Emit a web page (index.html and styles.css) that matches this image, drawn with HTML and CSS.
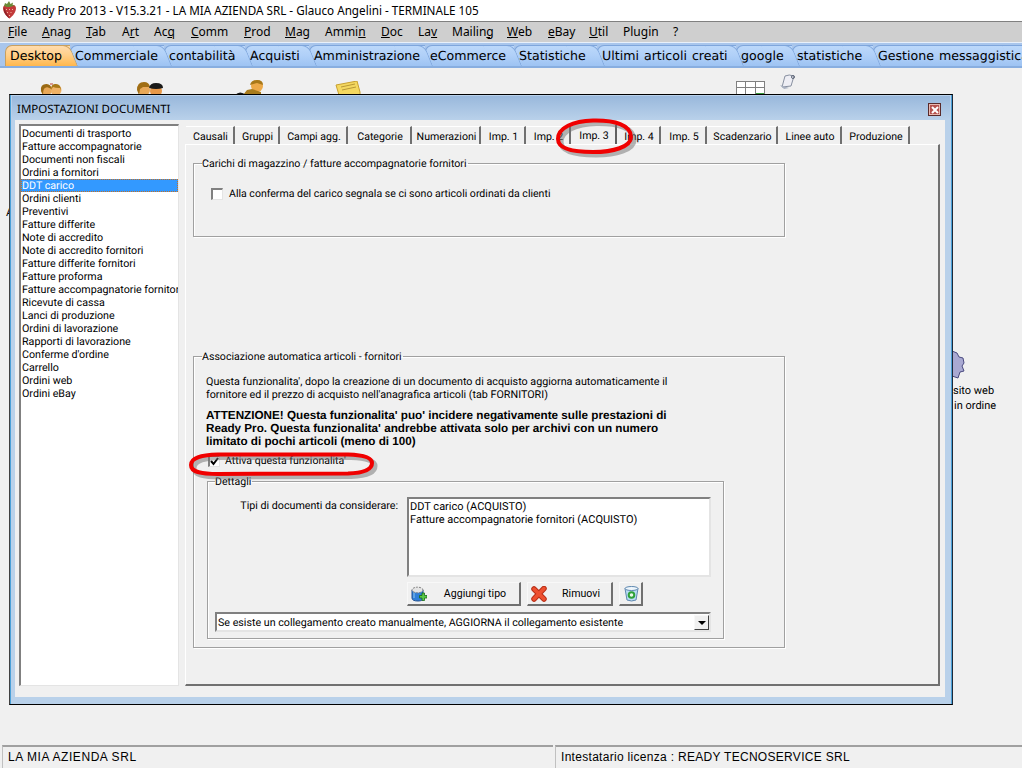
FILE: index.html
```html
<!DOCTYPE html>
<html lang="it">
<head>
<meta charset="utf-8">
<title>Ready Pro 2013</title>
<link rel="stylesheet" href="styles.css">
</head>
<body>
<div class="app">
  <header class="titlebar">
    <svg class="berry" width="15" height="18" viewBox="0 0 15 18"><path d="M1 7C1 4 4 3 7.500 4C11 3 14 4 14 7C14 11 11 15 7.500 17.500C4 15 1 11 1 7Z" fill="#c23a3a"/><path d="M2 6C3 10 6 14 7.500 17.500C4 15 1 11 2 6Z" fill="#8e2228"/><path d="M3 2L5 3L7 0L8.500 3L11 1.500L10.500 4L13 4.500L8 6L5 6L2 5Z" fill="#6a8a38"/><path d="M4 8L5 9M7 8L8 9M10 8L11 9M5 11L6 12M8.500 11L9.500 12M7 14L8 15" stroke="#f0b8a0"/></svg>
    <span class="apptitle">Ready Pro 2013 - V15.3.21 - LA MIA AZIENDA SRL - Glauco Angelini - TERMINALE 105</span>
  </header>
  <nav class="menubar">
    <span><u>F</u>ile</span><span><u>A</u>nag</span><span><u>T</u>ab</span><span>A<u>r</u>t</span><span>Ac<u>q</u></span><span><u>C</u>omm</span><span><u>P</u>rod</span><span><u>M</u>ag</span><span>Ammi<u>n</u></span><span><u>D</u>oc</span><span>La<u>v</u></span><span>Mailin<u>g</u></span><span><u>W</u>eb</span><span><u>e</u>Bay</span><span><u>U</u>til</span><span>Plugin</span><span>?</span>
  </nav>
  <nav class="maintabs">
    <span class="mtab active">Desktop</span><span class="mtab">Commerciale</span><span class="mtab">contabilità</span><span class="mtab">Acquisti</span><span class="mtab">Amministrazione</span><span class="mtab">eCommerce</span><span class="mtab">Statistiche</span><span class="mtab">Ultimi articoli creati</span><span class="mtab">google</span><span class="mtab">statistiche</span><span class="mtab">Gestione messaggistica</span>
  </nav>
  <main class="desktop">
    <svg class="dicon di1" width="22" height="12" viewBox="0 0 22 12"><circle cx="6.500" cy="7" r="5.500" fill="#e8a858"/><path d="M1 8Q0 1 6.500 1Q11 1 12 7Q8 3 5 5Q3 6 3 12Z" fill="#9a6a14"/><circle cx="16" cy="7" r="5.500" fill="#efb266"/><path d="M11 7Q11 0 16 1Q21 1 21 8L20 5Q15 5 13 4Z" fill="#a87818"/><path d="M10 1H13" stroke="#c04030"/></svg>
    <svg class="dicon di2" width="27" height="13" viewBox="0 0 27 13"><circle cx="7" cy="8" r="6" fill="#e8a858"/><path d="M0 8Q0 0 7 0Q12 0 13 5L6 5L3 7L2 13Z" fill="#a06e14"/><circle cx="19" cy="9" r="6" fill="#e89848"/><path d="M12 6Q13 1 19 1Q26 1 26 6Q19 8 12 6Z" fill="#1a1a1a"/></svg>
    <svg class="dicon di3" width="30" height="15" viewBox="0 0 30 15"><circle cx="22" cy="6" r="6" fill="#eda948"/><path d="M15 5Q16 0 22 0Q28 0 28 5L22 3Z" fill="#a87818"/><path d="M8 15L12 10L17 9L26 12L26 15Z" fill="#a87b1c"/><path d="M0 15Q5 10 11 15Z" fill="#1a1a1a"/></svg>
    <svg class="dicon di4" width="26" height="14" viewBox="0 0 26 14"><path d="M1 4L22 0L25 11L25 14L4 14Z" fill="#f4d860" stroke="#c8a030"/><path d="M6 6L20 3M7 9L21 6" stroke="#b89838"/></svg>
    <svg class="dicon di5" width="29" height="13" viewBox="0 0 29 13"><rect x=".5" y=".5" width="28" height="13" fill="#fff" stroke="#808080"/><path d="M9.500 0V13M19.500 0V13M0 6.500H29" stroke="#808080"/><rect x="20" y="12" width="8" height="1" fill="#3a9a3a"/></svg>
    <svg class="dicon di6" width="15" height="15" viewBox="0 0 15 15"><path d="M5 2Q9 0 14 2L11 12L2 13Z" fill="#eeeef4" stroke="#8890a0"/><path d="M0 11L9 14L4 15Z" fill="#a8b0c0"/><circle cx="13" cy="3" r="1.500" fill="none" stroke="#606878"/></svg>
    <svg class="dicon di7" width="14" height="30" viewBox="0 0 14 30"><path d="M0 1L5 3L7 7L11 8L12 13L10 16L12 21L8 22L6 28L0 26Z" fill="#a9a9d2" stroke="#4a4a80"/></svg>
    <span class="dlabel dl1">A</span>
    <span class="dlabel dl2">sito web</span>
    <span class="dlabel dl3">in ordine</span>

    <section class="dialog">
      <div class="dialog-title"><span>IMPOSTAZIONI DOCUMENTI</span><span class="closebtn"><svg width="8" height="8" viewBox="0 0 8 8"><path d="M1 1L7 7M7 1L1 7" stroke="#fff" stroke-width="2"/></svg></span></div>
      <div class="dialog-body">
        <ul class="doclist">
          <li>Documenti di trasporto</li><li>Fatture accompagnatorie</li><li>Documenti non fiscali</li><li>Ordini a fornitori</li><li class="sel">DDT carico</li><li>Ordini clienti</li><li>Preventivi</li><li>Fatture differite</li><li>Note di accredito</li><li>Note di accredito fornitori</li><li>Fatture differite fornitori</li><li>Fatture proforma</li><li>Fatture accompagnatorie fornitori</li><li>Ricevute di cassa</li><li>Lanci di produzione</li><li>Ordini di lavorazione</li><li>Rapporti di lavorazione</li><li>Conferme d'ordine</li><li>Carrello</li><li>Ordini web</li><li>Ordini eBay</li>
        </ul>
        <div class="pane">
          <div class="subtabs">
            <span>Causali</span><span>Gruppi</span><span>Campi agg.</span><span>Categorie</span><span>Numerazioni</span><span>Imp. 1</span><span>Imp. 2</span><span class="cur">Imp. 3</span><span>Imp. 4</span><span>Imp. 5</span><span>Scadenzario</span><span>Linee auto</span><span>Produzione</span>
          </div>
          <div class="panel">
            <fieldset class="group g1">
              <legend>Carichi di magazzino / fatture accompagnatorie fornitori</legend>
              <label class="check"><span class="box"></span>Alla conferma del carico segnala se ci sono articoli ordinati da clienti</label>
            </fieldset>
            <fieldset class="group g2">
              <legend>Associazione automatica articoli - fornitori</legend>
              <p class="desc">Questa funzionalita', dopo la creazione di un documento di acquisto aggiorna automaticamente il fornitore ed il prezzo di acquisto nell'anagrafica articoli (tab FORNITORI)</p>
              <p class="warn">ATTENZIONE! Questa funzionalita' puo' incidere negativamente sulle prestazioni di Ready Pro. Questa funzionalita' andrebbe attivata solo per archivi con un numero limitato di pochi articoli (meno di 100)</p>
              <label class="check on"><span class="box"><svg width="9" height="9" viewBox="0 0 9 9"><path d="M1 4L3.500 7L8 1" fill="none" stroke="#000" stroke-width="2"/></svg></span>Attiva questa funzionalita'</label>
              <fieldset class="group g3">
                <legend>Dettagli</legend>
                <div class="typesrow">
                  <span class="typeslabel">Tipi di documenti da considerare:</span>
                  <div class="types"><div>DDT carico (ACQUISTO)</div><div>Fatture accompagnatorie fornitori (ACQUISTO)</div></div>
                </div>
                <div class="btnrow">
                  <button class="btn b1" type="button"><svg width="16" height="16" viewBox="0 0 16 16"><path d="M1 4V12Q1 15 7 15Q12 15 12 12V4Z" fill="#2f7fd8" stroke="#1f4f90"/><path d="M3 6V12" stroke="#90c8f0"/><ellipse cx="6.500" cy="4" rx="5.500" ry="2.800" fill="#e4e4e4" stroke="#808080" stroke-dasharray="2 1"/><path d="M8.500 9.500H11V7H13.500V9.500H16V12H13.500V14.500H11V12H8.500Z" fill="#58c848" stroke="#186818" stroke-width=".8"/></svg><span>Aggiungi tipo</span></button>
                  <button class="btn b2" type="button"><svg width="16" height="16" viewBox="0 0 16 16"><path d="M3 3L13 13M13 2.500L3 13" stroke="#b83018" stroke-width="5.500" stroke-linecap="round"/><path d="M3 3L13 13M13 2.500L3 13" stroke="#ee5030" stroke-width="3.500" stroke-linecap="round"/></svg><span>Rimuovi</span></button>
                  <button class="btn b3" type="button"><svg width="15" height="16" viewBox="0 0 15 16"><path d="M1 2.500L3 14Q7.500 16 12 14L14 2.500Z" fill="#b8dcf4" stroke="#5f88b0"/><ellipse cx="7.500" cy="2.500" rx="6.500" ry="2" fill="#eef6fc" stroke="#5f88b0"/><circle cx="7.500" cy="9" r="2.800" fill="#e8f8e8" stroke="#2ea038" stroke-width="2"/></svg></button>
                </div>
                <div class="combo"><span>Se esiste un collegamento creato manualmente, AGGIORNA il collegamento esistente</span><span class="arrow"></span></div>
              </fieldset>
            </fieldset>
          </div>
        </div>
      </div>
    </section>

    <svg class="mark m1" width="90" height="50" viewBox="0 0 90 50"><path d="M8 28C8 17 23 10 43 9.500C65 9 81 14 81 26C81 36 63 41 43 41C23 41 8 38 8 28Z" fill="none" stroke="#707070" stroke-opacity=".5" stroke-width="5"/><path d="M5 25C5 14 20 7 40 6.500C62 6 78 11 78 23C78 33 60 38 40 38C20 38 5 35 5 25Z" fill="none" stroke="#f00000" stroke-width="4"/></svg>
    <svg class="mark m2" width="192" height="36" viewBox="0 0 192 36"><path d="M6 20C6 13 15 10 33 9.500L163 9.500C179 10 187 13 187 18C187 25 179 28 163 28.500L33 29C15 29 6 27 6 20Z" fill="none" stroke="#707070" stroke-opacity=".5" stroke-width="5"/><path d="M3 17C3 10 12 7 30 6.500L160 6.500C176 7 184 10 184 15C184 22 176 25 160 25.500L30 26C12 26 3 24 3 17Z" fill="none" stroke="#f00000" stroke-width="4"/></svg>
  </main>
  <footer class="statusbar">
    <span class="stat s1">LA MIA AZIENDA SRL</span>
    <span class="stat s2">Intestatario licenza : READY TECNOSERVICE SRL</span>
  </footer>
</div>
</body>
</html>
```
FILE: styles.css
```css
* { box-sizing: border-box; }
html, body { margin: 0; padding: 0; }
body { width: 1022px; height: 768px; overflow: hidden; font-family: "Liberation Sans", Arial, sans-serif; font-size: 12px; color: #000; background: #f0f0f0; }
.app { display: flex; flex-direction: column; height: 768px; }

.titlebar { height: 22px; flex: none; background: #fff; display: flex; align-items: center; padding: 0 0 2px 2px; border-bottom: 1px solid #808080; }
.berry { flex: none; }
.apptitle { margin-left: 4px; font-family: "Noto Sans", sans-serif; font-size: 11.700px; white-space: nowrap; }

.menubar { height: 20px; flex: none; background: #cfcfcf; display: grid; grid-template-columns: 34px 44px 36px 32px 37px 53px 41px 40px 56px 37px 34px 55px 41px 41px 34px 50px 10px; padding: 0 0 2px 8px; align-items: center; font-family: "Noto Sans", sans-serif; font-size: 12px; white-space: nowrap; }

.maintabs { height: 26px; flex: none; background: #a9c6ec; border-top: 1px solid #e8f0fa; border-bottom: 2px solid #88aee0; display: grid; grid-template-columns: 65px 94px 81px 64px 116px 89px 83px 139px 56px 81px 160px; padding: 2px 0 0 5px; font-family: "DejaVu Sans", sans-serif; font-size: 12.600px; word-spacing: 1px; text-rendering: geometricPrecision; overflow: hidden; position: relative; isolation: isolate; }
.mtab { position: relative; padding: 1px 0 0 4px; white-space: nowrap; height: 22px; line-height: 17px; border-top-left-radius: 7px; background: linear-gradient(#bcd8fa, #b0d0f8 45%, #9cc2f2); border-left: 1px solid #7fa6dc; border-top: 1px solid #7fa6dc; }
.mtab::after { content: ""; position: absolute; z-index: -1; top: -1px; right: -4px; bottom: 0; width: 30px; transform: skewX(22deg); border-top-right-radius: 7px; background: inherit; border-right: 1px solid #7fa6dc; border-top: 1px solid #7fa6dc; }
.mtab:nth-child(1) { z-index: 12; }
.mtab:nth-child(2) { z-index: 11; }
.mtab:nth-child(3) { z-index: 10; }
.mtab:nth-child(4) { z-index: 9; }
.mtab:nth-child(5) { z-index: 8; }
.mtab:nth-child(6) { z-index: 7; }
.mtab:nth-child(7) { z-index: 6; }
.mtab:nth-child(8) { z-index: 5; }
.mtab:nth-child(9) { z-index: 4; }
.mtab:nth-child(10) { z-index: 3; }
.mtab:nth-child(11) { z-index: 2; }
.mtab.active { padding-left: 4px; background: linear-gradient(#ffdcae, #ffcf88 45%, #ffb548); border-color: #c8a060; }
.mtab.active::after { border-color: #c8a060; }

.desktop { flex: 1; position: relative; background: #f0f0f0; }
.dicon { position: absolute; }
.di1 { left: 40px; top: 15px; }
.di2 { left: 137px; top: 14px; }
.di3 { left: 235px; top: 12px; }
.di4 { left: 335px; top: 13px; }
.di5 { left: 736px; top: 13px; }
.di6 { left: 780px; top: 6px; }
.di7 { left: 952px; top: 282px; }
.dlabel { position: absolute; font-family: Roboto, sans-serif; font-size: 11px; line-height: 14px; white-space: nowrap; text-rendering: geometricPrecision; }
.dl1 { left: 6px; top: 138px; }
.dl2 { left: 953px; top: 316px; }
.dl3 { left: 954px; top: 331px; }

.dialog { position: absolute; left: 9px; top: 26px; width: 944px; height: 611px; display: flex; flex-direction: column; border: 1px solid #000; background: #b9d1ea; border-left: 1px solid #404040; border-right: 1px solid #1e2a3a; padding: 1px 7px 7px 6px; box-shadow: inset 1px 0 0 #4aa0d8, inset -1px 0 0 #4aa0d8; font-family: Roboto, sans-serif; text-rendering: geometricPrecision; }
.dialog-title { height: 24px; flex: none; margin: 0 -5px 0 -4px; padding: 3px 9px 0 5px; display: flex; justify-content: space-between; align-items: center; background: linear-gradient(#99b8dc, #b9d1ea); font-family: "Noto Sans", sans-serif; font-size: 11.500px; }
.closebtn { width: 13px; height: 13px; display: flex; align-items: center; justify-content: center; background: #b5524e; border: 1px solid #5a2a2a; box-shadow: inset 0 0 0 1px #e8b8b0; }
.dialog-body { flex: 1; display: flex; min-height: 0; background: #f0f0f0; padding: 4px 5px 11px 4px; gap: 6px; margin-left: -1px; }

.doclist { list-style: none; margin: 0; padding: 1px 0 0 0; width: 160px; flex: none; background: #fff; border: 2px solid #808080; border-right: 1px solid #e4e4e4; border-bottom: 1px solid #e4e4e4; overflow: hidden; }
.doclist li { height: 13px; line-height: 13px; padding-left: 1px; white-space: nowrap; font-size: 10.700px; overflow: hidden; }
.doclist .sel { background: #3399ff; color: #fff; outline: 1px dotted #c87020; outline-offset: -1px; }

.pane { flex: 1; display: flex; flex-direction: column; min-width: 0; }
.subtabs { height: 20px; flex: none; display: grid; grid-template-columns: 49px 45px 68px 64px 69px 45px 45px 46px 44px 46px 71px 64px 68px; align-items: end; font-size: 10.600px; margin-left: 1px; }
.subtabs span { height: 18px; padding: 3px 0 0 2px; line-height: 14px; text-align: center; white-space: nowrap; border-top: 1px solid #fff; border-right: 2px solid #707070; background: #f0f0f0; }
.subtabs .cur { height: 20px; padding-top: 4px; border-right: 2px solid #606060; position: relative; }
.panel { flex: 1; background: #f0f0f0; border: 2px solid #707070; border-top: 1px solid #fff; border-left: 1px solid #fff; padding: 12px 0 0 7px; display: flex; flex-direction: column; min-height: 0; }

.group { margin: 0; padding: 0; border: 1px solid #a0a0a0; box-shadow: 1px 1px 0 #fff, inset 1px 1px 0 #fff; min-width: 0; }
.group legend { padding: 0 1px 0 0; font-size: 10.600px; line-height: 13px; white-space: nowrap; }
.g1 { width: 592px; height: 80px; padding: 17px 0 0 17px; }
.g1 > legend { margin-left: -9px; }
.g2 { width: 592px; height: 298px; margin-top: 113px; padding: 12px 0 0 13px; }
.g2 > legend { margin-left: -5px; }
.check { display: flex; align-items: center; font-size: 10.550px; line-height: 13px; }
.box { width: 12px; height: 12px; margin-right: 6px; flex: none; background: #fff; border: 2px solid #808080; border-right: 1px solid #e4e4e4; border-bottom: 1px solid #e4e4e4; display: flex; align-items: center; justify-content: center; }
.desc, .warn { margin: 0 0 0 -1px; width: 480px; font-size: 10.750px; line-height: 13px; }
.warn { margin-top: 8px; font-family: "Liberation Sans", sans-serif; font-weight: bold; font-size: 11.700px; }
.check.on { margin: 6px 0 0 1px; }
.check.on .box { margin-right: 5px; }
.g3 { width: 517px; height: 164px; margin: 8px 0 0 0; padding: 9px 0 0 7px; }
.typesrow { display: flex; gap: 9px; }
.typeslabel { width: 183px; padding: 2px 0 0 0; text-align: right; font-size: 10.700px; white-space: nowrap; flex: none; }
.types { width: 304px; height: 80px; background: #fff; border: 2px solid #808080; border-right-color: #e4e4e4; border-bottom-color: #e4e4e4; padding: 1px; font-size: 11px; line-height: 13px; }
.btnrow { display: flex; gap: 6px; margin: 5px 0 0 192px; }
.btn { height: 24px; padding: 0; background: #f0f0f0; border: 1px solid #f8f8f8; border-right: 2px solid #707070; border-bottom: 2px solid #707070; display: flex; align-items: center; font-family: inherit; font-size: 10.600px; color: #000; }
.btn svg { flex: none; margin-left: 3px; }
.btn span { flex: 1; padding-left: 4px; text-align: center; white-space: nowrap; }
.b1 { width: 114px; }
.b2 { width: 86px; }
.b3 { width: 24px; }
.b3 svg { margin-left: 4px; }
.combo { width: 496px; height: 20px; margin-top: 6px; background: #fff; border: 2px solid #808080; border-right-color: #e4e4e4; border-bottom-color: #e4e4e4; display: flex; align-items: center; justify-content: space-between; padding-left: 1px; font-size: 10.700px; white-space: nowrap; }
.arrow { width: 15px; height: 15px; background: #f0f0f0; border: 1px solid #f8f8f8; border-right: 1px solid #404040; border-bottom: 1px solid #404040; position: relative; }
.arrow::after { content: ""; position: absolute; left: 3px; top: 5px; border: 4px solid transparent; border-top: 4px solid #000; border-bottom: 0; }

.mark { position: absolute; pointer-events: none; }
.m1 { left: 553px; top: 46px; }
.m2 { left: 188px; top: 380px; }

.statusbar { height: 23px; flex: none; display: flex; gap: 2px; padding-left: 2px; }
.stat { display: flex; align-items: center; padding: 0 0 2px 5px; height: 23px; border-top: 2px solid #a0a0a0; border-left: 1px solid #c0c0c0; font-size: 12px; letter-spacing: .55px; white-space: nowrap; }
.s1 { width: 551px; }
.s2 { flex: 1; letter-spacing: .3px; }
```
